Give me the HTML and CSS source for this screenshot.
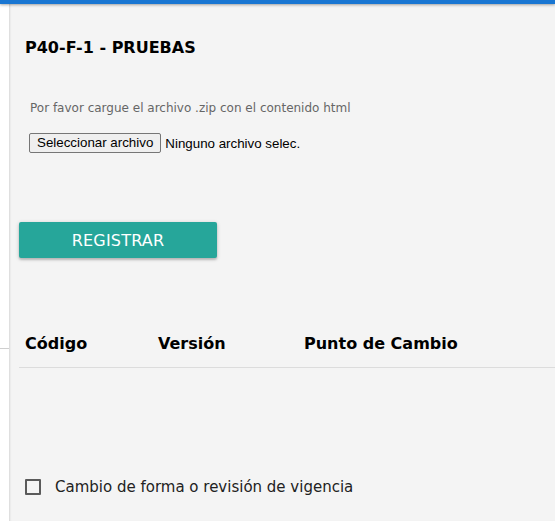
FILE: index.html
```html
<html>
  <head>
    <title>P40-F-1 - PRUEBAS</title>
    <link rel="stylesheet" href="styles.css">
  </head>
  <body>
    <header class="topbar"></header>
    <div class="layout">
      <aside class="side">
        <div class="side-line"></div>
      </aside>
      <main class="panel">
        <h1>P40-F-1 - PRUEBAS</h1>
        <p class="hint">Por favor cargue el archivo .zip con el contenido html</p>
        <div class="file-field">
          <label class="file-btn">Seleccionar archivo<input type="file" accept=".zip"></label>
          <span class="file-name">Ninguno archivo selec.</span>
        </div>
        <button class="btn-register">REGISTRAR</button>
        <table class="changes">
          <thead>
            <tr>
              <th class="col-code">Código</th>
              <th class="col-version">Versión</th>
              <th>Punto de Cambio</th>
            </tr>
          </thead>
          <tbody></tbody>
        </table>
        <label class="check">
          <input type="checkbox">
          <span class="box"></span>
          <span>Cambio de forma o revisión de vigencia</span>
        </label>
      </main>
    </div>
  </body>
</html>
```

FILE: styles.css
```css
html,
body {
  margin: 0;
  padding: 0;
  height: 100%;
  font-family: "DejaVu Sans", Verdana, sans-serif;
  background: #fff;
  color: #000;
  overflow: hidden;
}

.topbar {
  height: 4px;
  background: #1976d2;
  box-shadow: 0 1px 3px rgba(0, 0, 0, 0.35);
  position: relative;
  z-index: 2;
}

.layout {
  display: flex;
  height: calc(100% - 4px);
}

.side {
  width: 9px;
  flex-shrink: 0;
  background: #fff;
}

.side-line {
  margin-top: 344px;
  height: 1px;
  background: #cfcfcf;
}

.panel {
  flex: 1;
  background: #f4f4f4;
  box-shadow: inset 2px 0 2px -1px rgba(0, 0, 0, 0.12);
  padding: 0 0 0 10px;
}

h1 {
  margin: 34px 0 0 6px;
  font-size: 16px;
  font-weight: bold;
  line-height: 20px;
}

.hint {
  margin: 43px 0 0 11px;
  font-size: 12px;
  line-height: 14px;
  color: #666;
}

.file-field {
  display: flex;
  align-items: center;
  margin: 18px 0 0 10px;
  font-family: "Liberation Sans", Arial, sans-serif;
  font-size: 13.33px;
}

.file-btn {
  display: inline-block;
  height: 18px;
  line-height: 18px;
  padding: 0 7px;
  border: 1px solid #767676;
  border-radius: 2px;
  background: #efefef;
  color: #000;
}

.file-btn input {
  display: none;
}

.file-name {
  margin-left: 4px;
}

.btn-register {
  display: block;
  margin: 69px 0 0 0;
  width: 198px;
  height: 36px;
  border: none;
  border-radius: 2px;
  background: #26a69a;
  color: #fff;
  font-family: "DejaVu Sans", Verdana, sans-serif;
  font-size: 16px;
  letter-spacing: 0.2px;
  box-shadow: 0 2px 2px rgba(0, 0, 0, 0.14), 0 1px 4px rgba(0, 0, 0, 0.2);
}

.changes {
  margin-top: 66px;
  width: 100%;
  border-collapse: collapse;
}

.changes th {
  text-align: left;
  font-size: 16px;
  font-weight: bold;
  padding: 10px 6px 14px;
  border-bottom: 1px solid #dcdcdc;
}

.changes .col-code {
  width: 121px;
}

.changes .col-version {
  width: 134px;
}

.check {
  display: flex;
  align-items: center;
  margin: 110px 0 0 6px;
  font-size: 15px;
  color: #222;
}

.check input {
  display: none;
}

.check .box {
  width: 12px;
  height: 12px;
  border: 2px solid #5a5a5a;
  border-radius: 1px;
  margin-right: 14px;
}
```
